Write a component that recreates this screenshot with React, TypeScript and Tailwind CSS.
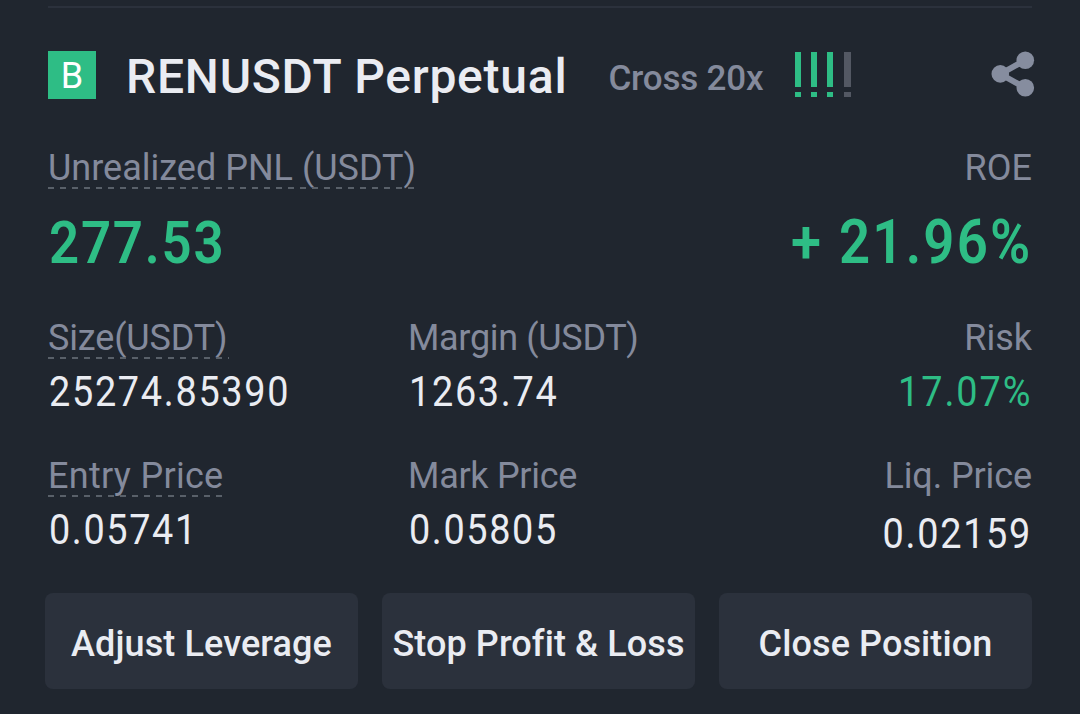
import React from "react";
import clsx from "clsx";

const BARS = ["bg-[#2ebd85]", "bg-[#2ebd85]", "bg-[#2ebd85]", "bg-[#535863]"];

function RiskBars() {
  return (
    <div className="flex ml-[32px] mt-[1px]">
      {BARS.map((color, i) => (
        <div
          key={i}
          className={clsx("flex flex-col gap-[5px]", i === 3 ? "w-[7px] ml-[11px]" : "w-[6px]", (i === 1 || i === 2) && "ml-[10px]")}
        >
          <span className={clsx("h-[35px]", color)} />
          <span className={clsx("h-[5px]", color)} />
        </div>
      ))}
    </div>
  );
}

function ShareIcon() {
  return (
    <svg width="46" height="46" viewBox="0 0 46 46" className="ml-auto -mr-[4px]">
      <path d="M34.5 9.5 10.5 23 34.5 36.5" fill="none" stroke="#868d9f" strokeWidth="6" />
      <circle cx="35.3" cy="9.3" r="8.8" fill="#868d9f" />
      <circle cx="10.3" cy="22.9" r="8.8" fill="#868d9f" />
      <circle cx="35.3" cy="36.8" r="8.8" fill="#868d9f" />
    </svg>
  );
}

interface LabelProps {
  text: string;
  className?: string;
  underline?: string;
}

function Label({ text, className, underline }: LabelProps) {
  return (
    <div className="flex flex-col h-[44px]">
      <span className={clsx("h-[40px] text-4xl leading-[42px] whitespace-nowrap text-[#848a9c]", className)}>{text}</span>
      {underline && (
        <span
          className={clsx(
            "h-[2px] bg-[repeating-linear-gradient(90deg,#596069_0px,#596069_6px,transparent_6px,transparent_12px)]",
            underline
          )}
        />
      )}
    </div>
  );
}

function Value({ text, className }: { text: string; className?: string }) {
  return (
    <span className={clsx("block h-[48px] text-[42px] leading-[48px] whitespace-nowrap scale-x-90", className)}>
      {text}
    </span>
  );
}

function ActionButton({ text }: { text: string }) {
  return (
    <button className="flex-1 h-24 pt-[5px] rounded-lg bg-[#2b313c] text-4xl font-medium tracking-[0.1px] whitespace-nowrap">
      {text}
    </button>
  );
}

function App() {
  return (
    <div className="w-[1080px] h-[714px] overflow-hidden bg-[#20262f] px-12 pt-[6px] font-['Roboto','Liberation_Sans',sans-serif] text-[#eaecf2]">
      {/* Divider */}
      <div className="h-[2px] bg-[#2b313c]" />

      {/* Header */}
      <header className="flex items-center h-[58px] mt-[37px]">
        <div className="flex items-center justify-center size-12 mt-[2px] pt-[1px] bg-[#2ebd85] text-4xl text-white">B</div>
        <h1 className="ml-[30px] text-5xl leading-[58px] font-medium tracking-[0.75px] whitespace-nowrap mt-[6px]">RENUSDT Perpetual</h1>
        <span className="ml-[41px] mt-[10px] text-[35px] font-medium tracking-[-0.2px] whitespace-nowrap text-[#848a9c]">Cross 20x</span>
        <RiskBars />
        <ShareIcon />
      </header>

      {/* PNL and ROE */}
      <section className="flex justify-between mt-[44px] h-[170px]">
        <div>
          <Label text="Unrealized PNL (USDT)" underline="w-[367px]" />
          <span className="block mt-[20px] ml-[1px] text-[60px] leading-[64px] font-semibold tracking-[2px] origin-left scale-x-[0.88] text-[#2ebd85]">
            277.53
          </span>
        </div>
        <div className="text-right">
          <Label text="ROE" />
          <span className="block mt-[19px] text-[62px] leading-[64px] font-semibold tracking-[2.5px] -mr-[1px] whitespace-nowrap origin-right scale-x-[0.88] text-[#2ebd85]">
            + 21.96%
          </span>
        </div>
      </section>

      {/* Size, margin and risk */}
      <section className="flex h-[138px]">
        <div className="w-[360px]">
          <Label text="Size(USDT)" className="tracking-[-0.15px]" underline="w-[181px]" />
          <Value text="25274.85390" className="mt-[7px] ml-[1px] tracking-[1.9px] origin-left" />
        </div>
        <div>
          <Label text="Margin (USDT)" className="tracking-[-0.33px]" />
          <Value text="1263.74" className="mt-[7px] ml-[1px] tracking-[1.9px] origin-left" />
        </div>
        <div className="ml-auto text-right">
          <Label text="Risk" />
          <Value text="17.07%" className="mt-[7px] tracking-[2.2px] origin-right text-[#2ebd85]" />
        </div>
      </section>

      {/* Prices */}
      <section className="flex h-[138px]">
        <div className="w-[360px]">
          <Label text="Entry Price" className="tracking-[0.3px]" underline="w-[175px]" />
          <Value text="0.05741" className="mt-[7px] ml-[1px] tracking-[1.8px] origin-left" />
        </div>
        <div>
          <Label text="Mark Price" className="tracking-[-0.3px]" />
          <Value text="0.05805" className="mt-[7px] ml-[1px] tracking-[1.8px] origin-left" />
        </div>
        <div className="ml-auto text-right">
          <Label text="Liq. Price" className="tracking-[-0.1px]" />
          <Value text="0.02159" className="mt-[11px] tracking-[1.9px] origin-right" />
        </div>
      </section>

      {/* Actions */}
      <div className="flex gap-6 -ml-[3px]">
        <ActionButton text="Adjust Leverage" />
        <ActionButton text="Stop Profit & Loss" />
        <ActionButton text="Close Position" />
      </div>
    </div>
  );
}

export default App;
